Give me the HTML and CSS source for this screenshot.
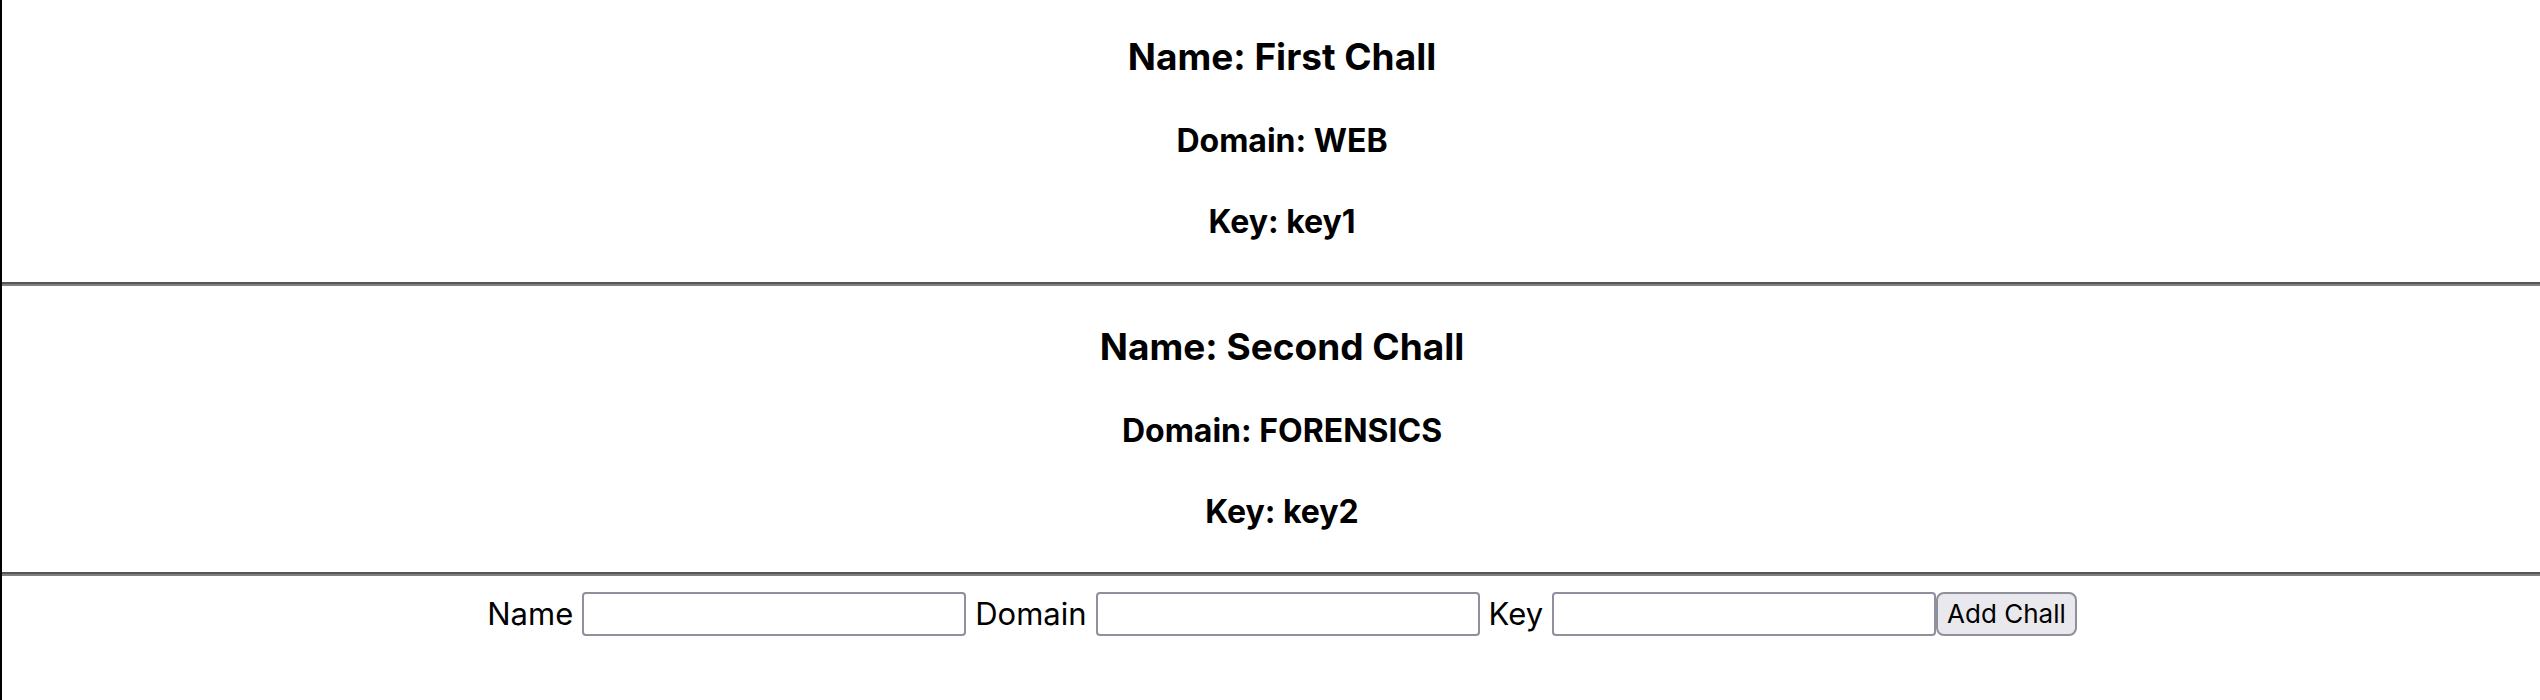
FILE: index.html
```html
<!DOCTYPE html>
<html lang="en">
<head>
<meta charset="utf-8">
<title>Challs</title>
<link rel="stylesheet" href="styles.css">
</head>
<body>
<main class="page">
  <article class="chall">
    <h3 class="chall-name">Name: First Chall</h3>
    <h4 class="chall-detail">Domain: WEB</h4>
    <h4 class="chall-detail">Key: key1</h4>
  </article>
  <hr class="divider">
  <article class="chall">
    <h3 class="chall-name">Name: Second Chall</h3>
    <h4 class="chall-detail">Domain: FORENSICS</h4>
    <h4 class="chall-detail">Key: key2</h4>
  </article>
  <hr class="divider">
  <form class="chall-form">
    <label class="field">Name <input class="field-input" type="text" name="name"></label>
    <label class="field">Domain <input class="field-input" type="text" name="domain"></label>
    <label class="field">Key <input class="field-input" type="text" name="key"></label>
    <button class="add-button" type="button">Add Chall</button>
  </form>
</main>
</body>
</html>
```
FILE: styles.css
```css
* { box-sizing: border-box; }
body {
  margin: 0;
  background: #fff;
  color: #000;
  font-family: Inter, sans-serif;
  font-size: 31px;
  line-height: 38px;
}
.page {
  min-height: 100vh;
  border-left: 2px solid #000;
  text-align: center;
}
.chall {
  padding: 39px 0 41px 22px;
}
.chall:first-child { padding-top: 35px; }
.chall-name {
  margin: 0 0 43px;
  font-size: 37px;
  font-weight: 650;
  line-height: 44px;
}
.chall-detail {
  margin: 0 0 43px;
  font-size: 32px;
  font-weight: 650;
  line-height: 38px;
}
.chall-detail:last-child { margin-bottom: 0; }
.divider {
  margin: 0;
  border: 0;
  border-top: 2px solid #555;
  border-bottom: 2px solid #808080;
}
.chall-form {
  display: flex;
  justify-content: center;
  align-items: center;
  padding: 16px 0 0 22px;
}
.field {
  display: flex;
  align-items: center;
  gap: 9px;
  margin-right: 9px;
}
.field:nth-child(3) { margin-right: 0; }
.field-input {
  width: 384px;
  height: 44px;
  padding: 2px 4px;
  border: 2px solid #8f8f9d;
  border-radius: 4px;
  font: inherit;
}
.add-button {
  height: 44px;
  padding: 0 9px;
  border: 2px solid #8f8f9d;
  border-radius: 8px;
  background: #e9e9ed;
  color: #000;
  font: 26px/38px Inter, sans-serif;
}
```
